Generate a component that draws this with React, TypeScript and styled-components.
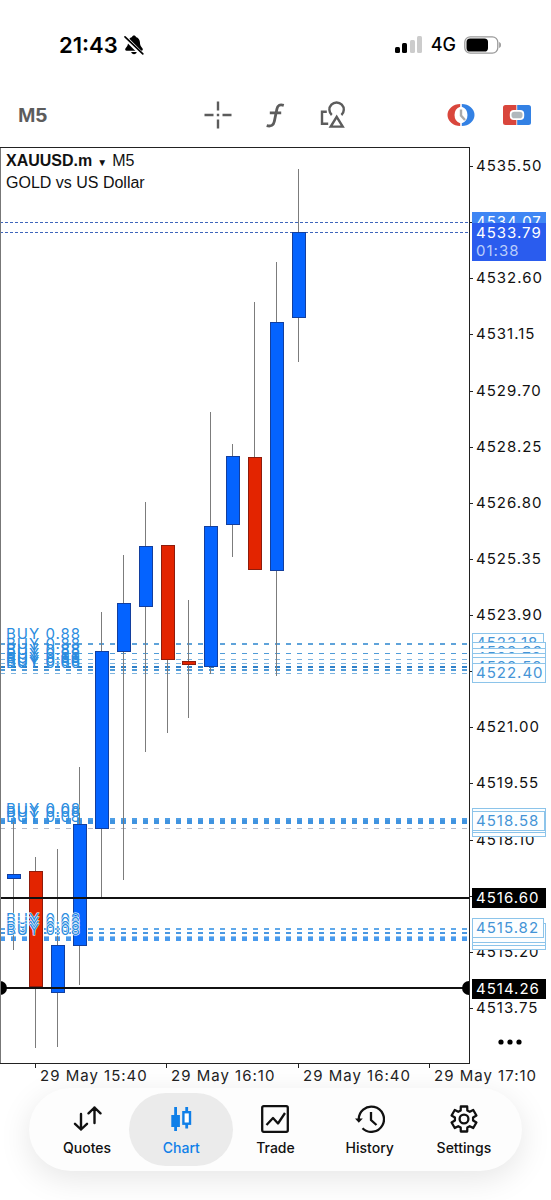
import React from "react";
import styled, { createGlobalStyle } from "styled-components";

const UI = `Inter, "Liberation Sans", sans-serif`;
const SANS = `"Liberation Sans", Arial, sans-serif`;

const GlobalStyle = createGlobalStyle`
  * { box-sizing: border-box; }
  body { margin: 0; background: #fff; color: #111; font-family: ${UI}; }
  button { border: 0; padding: 0; background: none; font: inherit; color: inherit; cursor: pointer; }
  svg { display: block; }
`;

const Page = styled.div`
  min-height: 100vh;
  display: flex;
  flex-direction: column;
  background: #fff;
`;

const StatusBar = styled.header`
  height: 85px;
  padding: 5px 49px 0 59px;
  display: flex;
  align-items: center;
  justify-content: space-between;
  color: #000;
`;

const StatusGroup = styled.div<{ $gap: number }>`
  display: flex;
  align-items: center;
  gap: ${(p) => p.$gap}px;
`;

const Clock = styled.time`
  font-size: 22px;
  line-height: 28px;
  font-weight: 600;
`;

const Network = styled.span`
  font-size: 18px;
  line-height: 24px;
  font-weight: 500;
`;

const Toolbar = styled.nav`
  height: 62px;
  padding: 0 20px 2px 18px;
  display: grid;
  grid-template-columns: 1fr auto 1fr;
  align-items: center;
  color: #5c5c5c;
`;

const ToolGroup = styled.div<{ $gap: number; $end?: boolean }>`
  display: flex;
  align-items: center;
  gap: ${(p) => p.$gap}px;
  justify-content: ${(p) => (p.$end ? "flex-end" : "flex-start")};
`;

const Timeframe = styled.button`
  justify-self: start;
  font-family: ${SANS};
  font-size: 21px;
  line-height: 28px;
  font-weight: 700;
`;

const ToolButton = styled.button`
  display: grid;
  place-items: center;
  height: 32px;
`;

const Chart = styled.main`
  position: relative;
  display: grid;
  grid-template-columns: minmax(0, 1fr) 82px;
`;

const Plot = styled.svg`
  width: 100%;
  height: 917px;
`;

const PriceAxis = styled.svg`
  width: 100%;
  height: 917px;
`;

const TimeAxis = styled.svg`
  grid-column: 1 / -1;
  width: 100%;
  height: 24px;
`;

const ChartTitle = styled.button`
  position: absolute;
  top: 4px;
  left: 6px;
  text-align: left;
  font-family: ${SANS};
  font-size: 16px;
  line-height: 20px;
  color: #111;
`;

const Symbol = styled.strong`
  font-weight: 700;
`;

const Caret = styled.span`
  font-size: 10px;
  margin: 0 5px;
`;

const TitleLine = styled.span`
  display: block;
`;

const MoreButton = styled.button`
  position: absolute;
  right: 27px;
  bottom: 36px;
  height: 20px;
  display: flex;
  align-items: center;
`;

const AxisText = styled.text`
  font-family: ${UI};
  font-size: 15px;
  letter-spacing: 1px;
`;

const TimeText = styled.text`
  font-family: ${UI};
  font-size: 15px;
  letter-spacing: 1px;
  fill: #222;
`;

const OrderText = styled.text<{ $halo?: boolean }>`
  font-family: ${UI};
  font-size: 15px;
  letter-spacing: 1px;
  fill: #2b8de0;
  stroke: ${(p) => (p.$halo ? "#fff" : "none")};
  stroke-width: 1px;
  paint-order: stroke;
`;

const Footer = styled.footer`
  padding: 0 29px 29px;
`;

const TabBar = styled.nav`
  height: 83px;
  padding: 5px 11px;
  display: grid;
  grid-template-columns: repeat(5, 1fr);
  border-radius: 42px;
  background: #fdfdfd;
  box-shadow: 0 8px 32px rgba(0, 0, 0, 0.1);
`;

const Tab = styled.button<{ $active?: boolean }>`
  margin: 0 -5px;
  padding-top: 2px;
  border-radius: 37px;
  display: flex;
  flex-direction: column;
  align-items: center;
  justify-content: center;
  gap: 6px;
  background: ${(p) => (p.$active ? "#ebebeb" : "transparent")};
  color: ${(p) => (p.$active ? "#0f7fe8" : "#111")};
`;

const TabLabel = styled.span`
  font-size: 14px;
  line-height: 18px;
  font-weight: 500;
`;

type Candle = { x: number; high: number; top: number; bottom: number; low: number; up: boolean };

const candles: Candle[] = [
  { x: 14, high: 675, top: 728, bottom: 731, low: 803, up: true },
  { x: 36, high: 710, top: 725, bottom: 839, low: 901, up: false },
  { x: 58, high: 702, top: 799, bottom: 845, low: 900, up: true },
  { x: 80, high: 620, top: 678, bottom: 798, low: 838, up: true },
  { x: 102, high: 465, top: 505, bottom: 681, low: 750, up: true },
  { x: 124, high: 408, top: 457, bottom: 504, low: 733, up: true },
  { x: 146, high: 355, top: 400, bottom: 459, low: 605, up: true },
  { x: 168, high: 398, top: 399, bottom: 512, low: 586, up: false },
  { x: 189, high: 453, top: 515, bottom: 517, low: 571, up: false },
  { x: 211, high: 265, top: 380, bottom: 519, low: 527, up: true },
  { x: 233, high: 297, top: 310, bottom: 377, low: 410, up: true },
  { x: 255, high: 155, top: 311, bottom: 422, low: 422, up: false },
  { x: 277, high: 115, top: 176, bottom: 423, low: 529, up: true },
  { x: 299, high: 22, top: 86, bottom: 170, low: 215, up: true },
];

type OrderLine = { y: number; weight: number; color: string };

const orderLines: OrderLine[] = [
  { y: 497, weight: 2, color: "#5fa3da" },
  { y: 506, weight: 1, color: "#4f9bd8" },
  { y: 512, weight: 1, color: "#7db4e0" },
  { y: 516, weight: 1, color: "#7db4e0" },
  { y: 520, weight: 2, color: "#2f80c8" },
  { y: 523, weight: 2, color: "#4f9bd8" },
  { y: 526, weight: 1, color: "#7db4e0" },
  { y: 672, weight: 2, color: "#4f9fe6" },
  { y: 675, weight: 4, color: "#3f93e0" },
  { y: 681, weight: 1, color: "#b5b9c8" },
  { y: 782, weight: 2, color: "#5fa8ea" },
  { y: 786, weight: 2, color: "#4a98e2" },
  { y: 789, weight: 1, color: "#8fc2f0" },
  { y: 792, weight: 4, color: "#4a9bee" },
];

const orderLabels = [
  { y: 492, text: "BUY 0.88" },
  { y: 502, text: "BUY 0.88" },
  { y: 508, text: "BUY 0.88" },
  { y: 512, text: "BUY 0.88" },
  { y: 516, text: "BUY 0.66" },
  { y: 519, text: "BUY 0.66" },
  { y: 521, text: "BUY 0.66" },
  { y: 667, text: "BUY 0.08", halo: true },
  { y: 670, text: "BUY 0.08" },
  { y: 675, text: "BUY 0.08" },
  { y: 777, text: "BUY 0.08", halo: true },
  { y: 781, text: "BUY 0.08", halo: true },
  { y: 785, text: "BUY 0.08", halo: true },
  { y: 788, text: "BUY 0.08", halo: true },
];

const priceTicks = [
  "4535.50", "4534.05", "4532.60", "4531.15", "4529.70", "4528.25", "4526.80", "4525.35",
  "4523.90", "4522.45", "4521.00", "4519.55", "4518.10", "4516.65", "4515.20", "4513.75",
].map((label, i) => ({ label, y: 19 + Math.round(i * 56.13) }));

type PriceTag = { y: number; text: string; width: number; fill: string; border: string; color: string };

const open = (y: number, text: string, width = 74): PriceTag => ({
  y, text, width, fill: "#fcfeff", border: "#8cc4ea", color: "#4494d6",
});
const solid = (y: number, text: string, fill: string): PriceTag => ({
  y, text, width: 74, fill, border: fill, color: "#fff",
});

const priceTags: PriceTag[] = [
  solid(65, "4534.07", "#3f86f4"),
  open(486, "4523.18", 72),
  open(495, "4522.93"),
  open(501, "4522.78"),
  open(506, "4522.65"),
  open(510, "4522.52"),
  open(516, "4522.40"),
  open(670, "4518.50"),
  open(666, "4518.45"),
  open(661, "4518.66"),
  open(664, "4518.58", 73),
  solid(741, "4516.60", "#000"),
  open(783, "4515.54"),
  open(779, "4515.60"),
  open(776, "4515.70"),
  open(771, "4515.82", 72),
  solid(832, "4514.26", "#000"),
];

const timeTicks = [
  { x: 36, label: "29 May 15:40" },
  { x: 167, label: "29 May 16:10" },
  { x: 299, label: "29 May 16:40" },
  { x: 430, label: "29 May 17:10" },
];

const LevelLine = ({ y }: { y: number }) => <rect x="0" y={y} width="100%" height="2" fill="#111" />;

const QuoteLine = ({ y }: { y: number }) => (
  <line x1="0" x2="100%" y1={y} y2={y} stroke="#3f66bb" strokeWidth="1" strokeDasharray="3 2" shapeRendering="crispEdges" />
);

const CandleShape = ({ c }: { c: Candle }) => (
  <g shapeRendering="crispEdges">
    <rect x={c.x - 1} y={c.high} width="1" height={c.low - c.high} fill="#7c7c7c" />
    <rect x={c.x - 7} y={c.top - 1} width="14" height={c.bottom - c.top + 2} fill={c.up ? "#133f9e" : "#8e1c0c"} />
    <rect x={c.x - 6} y={c.top} width="12" height={c.bottom - c.top} fill={c.up ? "#0463ff" : "#e32400"} />
  </g>
);

const BellOff = () => (
  <svg width="20" height="20" viewBox="0 0 20 20" aria-label="Silent">
    <path d="M10 0.5c1.100 0 1.800.6 1.900 1.400 2.500.7 3.900 2.700 4 5.200.1 3 .7 4.300 2.500 6.200.9 1 .3 2.500-1 2.500H2.600c-1.300 0-1.900-1.500-1-2.500 1.800-1.900 2.400-3.200 2.500-6.200.1-2.500 1.500-4.500 4-5.200.1-.8.8-1.400 1.900-1.400z" fill="#000" />
    <path d="M7.200 17h5.600c-.3 1.400-1.300 2.200-2.800 2.200s-2.500-.8-2.800-2.200z" fill="#000" />
    <path d="M0.500 2L18 19.500" stroke="#fff" strokeWidth="4.400" />
    <path d="M1 1.800L18.800 18.800" stroke="#000" strokeWidth="1.700" strokeLinecap="round" />
  </svg>
);

const Signal = () => (
  <svg width="28" height="18" viewBox="0 0 28 18" aria-label="Signal">
    <rect x="0" y="11" width="5" height="6" rx="1.500" fill="#000" />
    <rect x="7" y="7" width="5" height="10" rx="1.500" fill="#000" />
    <rect x="15" y="4" width="5" height="13" rx="1.500" fill="#ccc" />
    <rect x="22" y="0" width="5" height="17" rx="1.500" fill="#ccc" />
  </svg>
);

const Battery = () => (
  <svg width="38" height="18" viewBox="0 0 38 18" aria-label="Battery">
    <rect x="0.800" y="0.800" width="33" height="16.400" rx="5.500" fill="#fff" stroke="#999" strokeWidth="1.300" />
    <rect x="2.500" y="2.500" width="21.500" height="13" rx="3.600" fill="#000" />
    <path d="M35.600 6.500c1.200.4 1.200 4.600 0 5z" fill="#888" stroke="#888" strokeWidth="0.600" />
  </svg>
);

const Crosshair = () => (
  <svg width="28" height="28" viewBox="0 0 28 28" stroke="#5c5c5c" strokeWidth="2.400">
    <path d="M14 0.500v9M14 18.500v9M0.500 14h9M18.500 14h9M12.800 14h2.400" />
  </svg>
);

const FunctionIcon = () => (
  <svg width="22" height="28" viewBox="0 0 22 28" fill="none" stroke="#5c5c5c" strokeWidth="2.800">
    <path d="M18.800 4.300c-4.200-1.300-6.200.2-6.900 3.700l-2.600 12.500c-.7 3.600-3.300 5.300-7.600 4.100M4.800 11.800h11.400" />
  </svg>
);

const Shapes = () => (
  <svg width="26" height="28" viewBox="0 0 26 28" fill="none" stroke="#5c5c5c" strokeWidth="2.400">
    <path d="M6.800 10.800H2v12H8.200" />
    <path d="M11.800 14a7.200 7.200 0 1 1 9.600 0" />
    <path d="M16.700 15.800L22.700 25.600H10.700z" />
  </svg>
);

const TimerIcon = () => (
  <svg width="28" height="24" viewBox="0 0 28 24" fill="none">
    <path d="M13.200 1A12.700 11 0 0 0 13.200 23L13.200 20.300A8.500 8.800 0 0 1 13.200 3.700z" fill="#d9463c" />
    <path d="M14.800 1A12.700 11 0 0 1 14.800 23L14.800 20.300A8.500 8.800 0 0 0 14.800 3.700z" fill="#3381e4" />
    <path d="M14 6.500v6l4 4.500" stroke="#aaa" strokeWidth="2.400" />
  </svg>
);

const TradeToggle = () => (
  <svg width="28" height="20" viewBox="0 0 28 20">
    <path d="M2.500 0H13.400V20H2.500A2.500 2.500 0 0 1 0 17.500V2.500A2.500 2.500 0 0 1 2.500 0z" fill="#d9463c" />
    <path d="M25.500 0H14.200V20H25.500A2.500 2.500 0 0 0 28 17.500V2.500A2.500 2.500 0 0 0 25.500 0z" fill="#3381e4" />
    <rect x="6.800" y="5" width="14.400" height="10" rx="4" fill="#fff" />
    <rect x="8.500" y="6.800" width="11" height="6.400" rx="2.800" fill="#b0b8bc" />
  </svg>
);

const QuotesIcon = () => (
  <svg width="30" height="28" viewBox="0 0 30 28" fill="none" stroke="currentColor" strokeWidth="2.400" strokeLinecap="round" strokeLinejoin="round">
    <path d="M9 9v15.500M3 18.800l6 5.700 6-5.700M22.500 18V2.500M16.500 8.300l6-5.800 6 5.800" />
  </svg>
);

const ChartIcon = () => (
  <svg width="22" height="28" viewBox="0 0 22 28">
    <path d="M4.200 2h2.800v24H4.200z" fill="currentColor" />
    <rect x="1.300" y="10" width="8.600" height="12" fill="currentColor" />
    <path d="M15.300 2h2.800v21.500h-2.800z" fill="currentColor" />
    <rect x="13.400" y="7.200" width="6.600" height="11.500" fill="#fff" stroke="currentColor" strokeWidth="2.400" />
  </svg>
);

const TradeIcon = () => (
  <svg width="28" height="28" viewBox="0 0 28 28" fill="none" stroke="currentColor" strokeWidth="2.300" strokeLinejoin="round">
    <rect x="1.200" y="1.200" width="25.600" height="25.600" rx="1.500" />
    <path d="M5.500 20l6.500-7 5 5.500L24 8" />
  </svg>
);

const HistoryIcon = () => (
  <svg width="30" height="28" viewBox="0 0 30 28" fill="none" stroke="currentColor" strokeWidth="2.300">
    <path d="M3.800 15A12.600 12.600 0 1 1 7.500 23.200" />
    <path d="M0 13.500h7.800L3.800 17.800z" fill="currentColor" stroke="none" />
    <path d="M16 7v8l5.500 5" />
  </svg>
);

const gear = (() => {
  const pts: string[] = [];
  const teeth = 6;
  for (let i = 0; i < teeth; i++) {
    const a = (i / teeth) * Math.PI * 2 - Math.PI / 2;
    [[-0.37, 9.2], [-0.25, 12.9], [0.25, 12.9], [0.37, 9.2]].forEach(([d, r]) => {
      pts.push(`${(14 + Math.cos(a + d) * r).toFixed(2)} ${(14 + Math.sin(a + d) * r).toFixed(2)}`);
    });
  }
  return `M${pts.join("L")}z`;
})();

const SettingsIcon = () => (
  <svg width="28" height="28" viewBox="0 0 28 28" fill="none" stroke="currentColor" strokeWidth="2.300" strokeLinejoin="round">
    <path d={gear} />
    <circle cx="14" cy="14" r="4.400" />
  </svg>
);

const tabs = [
  { label: "Quotes", icon: <QuotesIcon /> },
  { label: "Chart", icon: <ChartIcon />, active: true },
  { label: "Trade", icon: <TradeIcon /> },
  { label: "History", icon: <HistoryIcon /> },
  { label: "Settings", icon: <SettingsIcon /> },
];

export default function App() {
  return (
    <Page>
      <GlobalStyle />
      <StatusBar>
        <StatusGroup $gap={6}>
          <Clock>21:43</Clock>
          <BellOff />
        </StatusGroup>
        <StatusGroup $gap={8}>
          <Signal />
          <Network>4G</Network>
          <Battery />
        </StatusGroup>
      </StatusBar>

      <Toolbar>
        <Timeframe>M5</Timeframe>
        <ToolGroup $gap={33}>
          <ToolButton aria-label="Crosshair"><Crosshair /></ToolButton>
          <ToolButton aria-label="Indicators"><FunctionIcon /></ToolButton>
          <ToolButton aria-label="Objects"><Shapes /></ToolButton>
        </ToolGroup>
        <ToolGroup $gap={28} $end>
          <ToolButton aria-label="Pending order"><TimerIcon /></ToolButton>
          <ToolButton aria-label="One click trading"><TradeToggle /></ToolButton>
        </ToolGroup>
      </Toolbar>

      <Chart>
        <Plot aria-label="Price chart">
          <QuoteLine y={75} />
          <QuoteLine y={85} />
          {orderLines.map((l) => (
            <line key={l.y} x1="0" x2="100%" y1={l.y} y2={l.y} stroke={l.color} strokeWidth={l.weight} strokeDasharray="5 6" shapeRendering="crispEdges" />
          ))}
          {candles.map((c) => <CandleShape key={c.x} c={c} />)}
          {orderLabels.map((o) => (
            <OrderText key={o.y} x="6" y={o.y} $halo={o.halo}>{o.text}</OrderText>
          ))}
          <LevelLine y={750} />
          <LevelLine y={840} />
          <circle cx="0" cy="841" r="7" />
          <circle cx="100%" cy="841" r="7" />
          <rect x="0" y="0" width="1" height="917" fill="#777" />
          <rect x="0" y="0" width="100%" height="1" fill="#222" />
          <rect x="0" y="916" width="100%" height="1" fill="#222" />
        </Plot>
        <PriceAxis aria-label="Price scale">
          <rect x="0" y="0" width="1" height="917" fill="#222" />
          {priceTicks.map((t) => (
            <g key={t.label}>
              <rect x="0" y={t.y} width="4" height="1" fill="#222" />
              <AxisText x="7" y={t.y + 5} fill="#111">{t.label}</AxisText>
            </g>
          ))}
          {priceTags.map((t) => (
            <g key={t.text}>
              <rect x="3" y={t.y} width={t.width} height="20" fill={t.border} />
              <rect x="4" y={t.y + 1} width={t.width - 2} height="18" fill={t.fill} />
              <AxisText x="7" y={t.y + 15} fill={t.color}>{t.text}</AxisText>
            </g>
          ))}
          <rect x="3" y="76" width="74" height="38" fill="#2a5cee" />
          <AxisText x="7" y="91" fill="#fff">4533.79</AxisText>
          <AxisText x="7" y="109" fill="#b9cdfb">01:38</AxisText>
        </PriceAxis>
        <TimeAxis aria-label="Time scale">
          {timeTicks.map((t) => (
            <g key={t.x}>
              <rect x={t.x - 1} y="0" width="1" height="4" fill="#222" />
              <TimeText x={t.x + 4} y="17">{t.label}</TimeText>
            </g>
          ))}
        </TimeAxis>
        <ChartTitle>
          <TitleLine><Symbol>XAUUSD.m</Symbol><Caret>▼</Caret>M5</TitleLine>
          <TitleLine>GOLD vs US Dollar</TitleLine>
        </ChartTitle>
        <MoreButton aria-label="More">
          <svg width="28" height="6" viewBox="0 0 28 6">
            <circle cx="5" cy="3" r="2.600" />
            <circle cx="14" cy="3" r="2.600" />
            <circle cx="23" cy="3" r="2.600" />
          </svg>
        </MoreButton>
      </Chart>

      <Footer>
        <TabBar>
          {tabs.map((t) => (
            <Tab key={t.label} $active={t.active}>
              {t.icon}
              <TabLabel>{t.label}</TabLabel>
            </Tab>
          ))}
        </TabBar>
      </Footer>
    </Page>
  );
}
